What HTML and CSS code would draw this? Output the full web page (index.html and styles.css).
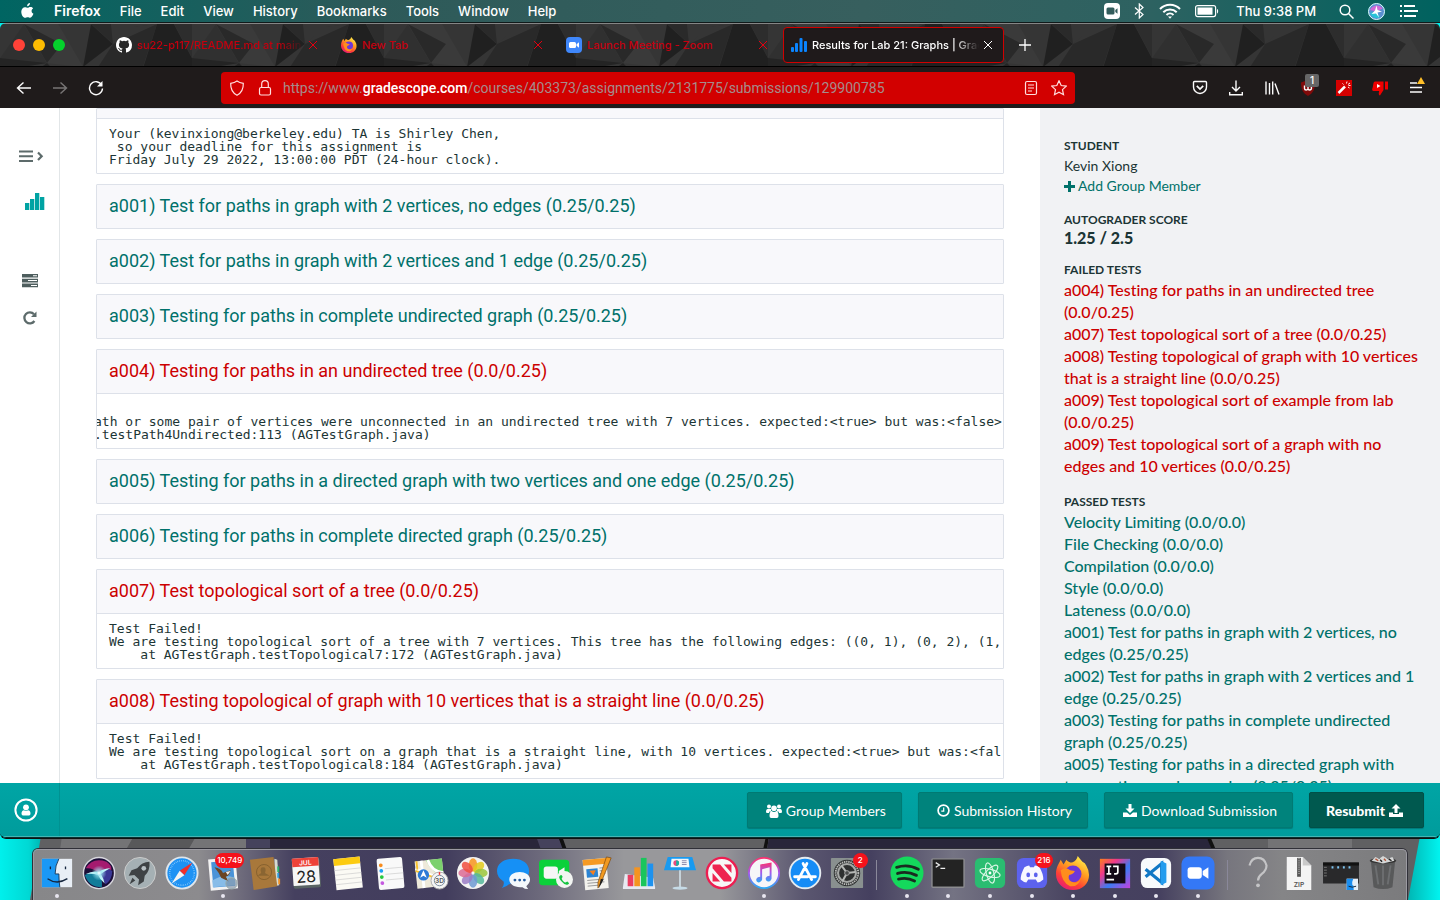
FILE: index.html
```html
<!DOCTYPE html>
<html lang="en">
<head>
<meta charset="utf-8">
<title>Results for Lab 21: Graphs | Gradescope</title>
<link rel="stylesheet" href="styles.css">
</head>
<body>
<svg class="wallpaper" viewBox="0 0 1440 900" preserveAspectRatio="none" aria-hidden="true">
  <defs>
    <linearGradient id="wg" x1="0" x2="1"><stop offset="0" stop-color="#00f0ec"/><stop offset=".02" stop-color="#00d8d4"/><stop offset=".035" stop-color="#009c9a"/><stop offset=".97" stop-color="#00a09e"/><stop offset="1" stop-color="#00f4f0"/></linearGradient>
  </defs>
  <rect width="1440" height="900" fill="url(#wg)"/>
  <path d="M41 836H1420L1408 900H30Z" fill="#606062"/>
  <path d="M62 836H134L126 850H60ZM196 836H248V850H188Z" fill="#747476"/>
  <path d="M134 836H196L188 850H126Z" fill="#58585a"/>
  <path d="M246 836H560L566 850H246Z" fill="#29263a"/>
  <path d="M246 836H270V850H246ZM536 836H558L564 850H541Z" fill="#45425c"/>
  <path d="M558 836H562L567 850H563ZM766 836H769L767 850H763Z" fill="#111"/>
  <path d="M769 836H1206L1213 850H767Z" fill="#29263a"/>
  <path d="M1206 836H1210L1216 850H1212Z" fill="#111"/>
  <path d="M1268 836H1352V850H1268Z" fill="#737375"/>
</svg>
<div class="desktop">
  <header class="menubar">
    <svg class="apple" viewBox="0 0 14 17"><path fill="#fff" d="M9.7 0c.1 1.800-1.400 3.500-3.100 3.500C6.400 1.800 8 .2 9.700 0zM13 5.800c-1 .600-1.600 1.500-1.600 2.700 0 1.400.800 2.500 2 3-.600 1.800-2 4.300-3.500 4.300-1 0-1.500-.600-2.700-.600-1.200 0-1.700.600-2.700.600C2.300 15.800.300 12.500.300 9.300c0-3.100 2-4.900 4-4.900 1.200 0 2 .700 2.900.7.900 0 1.800-.800 3.200-.8 1 0 2 .500 2.600 1.500z"/></svg>
    <nav class="menus"><b>Firefox</b><span>File</span><span>Edit</span><span>View</span><span>History</span><span>Bookmarks</span><span>Tools</span><span>Window</span><span>Help</span></nav>
    <div class="status">
      <svg width="16" height="16" viewBox="0 0 16 16"><rect width="16" height="16" rx="4" fill="#fff"/><rect x="2.500" y="4.500" width="8" height="7" rx="1.500" fill="#335d5c"/><path d="M11.300 7l2.200-1.700v5.400L11.300 9z" fill="#335d5c"/></svg>
      <svg width="11" height="16" viewBox="0 0 11 16" fill="none" stroke="#fff" stroke-width="1.200"><path d="M1 4.500l8 7L5.300 15V1L9 4.500l-8 7"/></svg>
      <svg width="22" height="16" viewBox="0 0 22 16" fill="none" stroke="#fff" stroke-width="2"><path d="M1 6a14 14 0 0 1 20 0M4.300 9.200a9.500 9.500 0 0 1 13.400 0M7.500 12a5 5 0 0 1 7 0"/><path d="M9 13.500h4L11 15.700z" fill="#fff" stroke="none"/></svg>
      <svg width="24" height="14" viewBox="0 0 24 14"><rect x=".6" y="1.600" width="20" height="11" rx="2" fill="none" stroke="#fff" stroke-width="1.200"/><rect x="2.500" y="3.500" width="15" height="7.200" fill="#fff"/><path d="M22 5v4.500c1.500-.500 1.500-4 0-4.500z" fill="#fff"/></svg>
      <span class="clock">Thu 9:38 PM</span>
      <svg width="15" height="15" viewBox="0 0 15 15" fill="none" stroke="#fff" stroke-width="1.500"><circle cx="6" cy="6" r="4.800"/><path d="M9.500 9.500l5 5"/></svg>
      <svg width="17" height="17" viewBox="0 0 34 34"><circle cx="17" cy="17" r="16" fill="#5b8fd0" stroke="#dff" stroke-width="2"/><path d="M4 14C8 3 24 2 29 11l-12 6z" fill="#d06ad8"/><path d="M4 20c3 9 14 13 20 8l-7-11z" fill="#27c4d8"/><path d="M17 5l2 9 9 3-9 2 3 10-6-8-9 1 7-7z" fill="#fff"/></svg>
      <svg width="19" height="14" viewBox="0 0 19 14" stroke="#fff" stroke-width="2"><path d="M1 2h2M1 7h2M1 12h2M5 2h11M5 7h14M5 12h12"/></svg>
    </div>
  </header>

  <div class="window">
    <div class="tabstrip">
      <svg class="pattern" aria-hidden="true"><defs><pattern id="tri" width="192" height="44" patternUnits="userSpaceOnUse"><rect width="192" height="44" fill="#353535"/>
        <path d="M91 0l22 20-30 23z" fill="#202020"/><path d="M91 0h20l2 20z" fill="#2a2a2a"/><path d="M113 20l20-17 24-3-14 43H98z" fill="#292929"/><path d="M132 3l25-3-44 20z" fill="#353535"/><path d="M157 0h17l18 34v10h-49z" fill="#202020"/><path d="M174 0h18v34z" fill="#2d2d2d"/><path d="M0 34L24 0l23 39-30 5H0z" fill="#303030"/><path d="M24 0h34L83 43 47 39z" fill="#3a3a3a"/><path d="M24 0l38 20-15 19z" fill="#292929"/><path d="M47 39l-7 5h12zM0 34l47 5-30 5H0z" fill="#242424"/></pattern></defs><rect width="100%" height="100%" fill="url(#tri)"/></svg>
      <div class="lights"><button class="light red" aria-label="Close window"></button><button class="light yellow" aria-label="Minimize"></button><button class="light green" aria-label="Zoom window"></button></div>
      <div class="tabs">
        <div class="tab"><svg width="16" height="16" viewBox="0 0 16 16"><path fill="#fff" d="M8 0C3.580 0 0 3.580 0 8c0 3.540 2.290 6.530 5.470 7.590.4.070.55-.17.55-.38 0-.19-.01-.82-.01-1.490-2.010.37-2.530-.49-2.690-.94-.09-.23-.48-.94-.82-1.130-.28-.15-.68-.52-.01-.53.63-.01 1.080.58 1.230.82.72 1.210 1.870.87 2.330.66.07-.52.28-.87.51-1.070-1.780-.2-3.640-.89-3.640-3.950 0-.87.31-1.590.82-2.150-.08-.2-.36-1.020.08-2.120 0 0 .67-.21 2.200.82a7.600 7.600 0 0 1 4 0c1.530-1.040 2.200-.82 2.200-.82.44 1.100.16 1.920.08 2.120.51.56.82 1.270.82 2.150 0 3.070-1.870 3.750-3.650 3.950.29.25.54.73.54 1.480 0 1.070-.01 1.930-.01 2.200 0 .21.15.46.55.38A8 8 0 0 0 16 8c0-4.420-3.580-8-8-8z"/></svg><span class="tab-title fade">su22-p117/README.md at main</span><button class="tab-close" aria-label="Close tab"><svg viewBox="0 0 8 8"><path d="M0 0l8 8M8 0L0 8"/></svg></button></div>
        <div class="tab"><svg width="16" height="16" viewBox="0 0 36 36"><use href="#fox"/></svg><span class="tab-title">New Tab</span><button class="tab-close" aria-label="Close tab"><svg viewBox="0 0 8 8"><path d="M0 0l8 8M8 0L0 8"/></svg></button></div>
        <div class="tab"><svg width="16" height="16" viewBox="0 0 16 16"><rect width="16" height="16" rx="4" fill="#3f87fb"/><rect x="3" y="5" width="7" height="6" rx="1.500" fill="#fff"/><path d="M10.500 7.200L13 5.300v5.400l-2.500-1.900z" fill="#fff"/></svg><span class="tab-title">Launch Meeting - Zoom</span><button class="tab-close" aria-label="Close tab"><svg viewBox="0 0 8 8"><path d="M0 0l8 8M8 0L0 8"/></svg></button></div>
        <div class="tab active"><svg width="16" height="16" viewBox="0 0 16 16" fill="#0a84ff"><rect y="10" width="3" height="5" rx="1"/><rect x="4" y="6" width="3" height="9" rx="1"/><rect x="8.500" y="1" width="3" height="14" rx="1"/><rect x="13" y="4" width="3" height="11" rx="1"/></svg><span class="tab-title fade">Results for Lab 21: Graphs | Grad</span><button class="tab-close" aria-label="Close tab"><svg viewBox="0 0 8 8"><path d="M0 0l8 8M8 0L0 8"/></svg></button></div>
        <button class="newtab" aria-label="New tab"><svg width="12" height="12" viewBox="0 0 12 12" stroke="#fff" stroke-width="1.300"><path d="M6 0v12M0 6h12"/></svg></button>
      </div>
    </div>
    <div class="toolbar">
      <div class="navbtns">
        <button aria-label="Back"><svg viewBox="0 0 16 16"><path d="M15 8H1.500M7.500 2.500L1.500 8l6 5.500"/></svg></button>
        <button class="dim" aria-label="Forward"><svg viewBox="0 0 16 16"><path d="M1 8h13.500M8.500 2.500l6 5.500-6 5.500"/></svg></button>
        <button aria-label="Reload"><svg viewBox="0 0 16 16"><path d="M13.700 5A6.500 6.500 0 1 0 14.500 8.500"/><path d="M14.500 1v5.500H9z" fill="#fff" stroke="none"/></svg></button>
      </div>
      <div class="urlbar">
        <svg viewBox="0 0 16 16"><path d="M8 1C6 2.500 4 3 1.700 3.300 1.500 9 3.500 13 8 15.300c4.500-2.300 6.500-6.300 6.300-12C12 3 10 2.500 8 1z"/></svg>
        <svg viewBox="0 0 16 16"><rect x="2.500" y="7.500" width="11" height="7.500" rx="1.500"/><path d="M4.700 7.500V4a3.300 3.300 0 0 1 6.600 0v3.500"/></svg>
        <div class="url">https://www.<b>gradescope.com</b>/courses/403373/assignments/2131775/submissions/129900785</div>
        <svg viewBox="0 0 16 16"><rect x="2.500" y="1.500" width="11" height="13" rx="1.500"/><path d="M5 5h6M5 8h6M5 11h4"/></svg>
        <svg viewBox="0 0 16 16"><path d="M8 .8l2.200 4.700 5.100.6-3.800 3.500 1 5.100L8 12.200l-4.500 2.500 1-5.100L.7 6.100l5.100-.6z"/></svg>
      </div>
      <div class="tools">
        <button aria-label="Pocket"><svg viewBox="0 0 16 16"><path d="M2.500 1.500h11a1 1 0 0 1 1 1V7a6.500 6.500 0 0 1-13 0V2.500a1 1 0 0 1 1-1z"/><path d="M4.800 5.800L8 9l3.200-3.200" stroke-width="1.700"/></svg></button>
        <button aria-label="Downloads"><svg viewBox="0 0 16 16"><path d="M8 .5v10M4 7l4 4 4-4M1.700 12v2.700h12.600V12"/></svg></button>
        <button aria-label="Library"><svg viewBox="0 0 16 16"><path d="M2 1.500v13M5.500 3v11.500M8.700 1.500v13M11 3.500l4 11"/></svg></button>
        <button class="ublock" aria-label="uBlock"><svg viewBox="0 0 16 16"><path d="M8 0l7 2.500C15 9 13.500 13 8 16 2.500 13 1 9 1 2.500z" fill="#800a0a" stroke="none"/><path d="M4.500 5.500v3q0 1.500 1.700 1.500T8 8.500v-2 2q0 1.500 1.700 1.500t1.800-2q0-1.500-1-2.500"/></svg><span class="count">1</span></button>
        <button aria-label="Wand"><svg viewBox="0 0 16 16"><rect width="16" height="16" fill="#d40000" stroke="none"/><path d="M2.500 13L9 6.500" stroke-width="2.500"/><path d="M6.500 3.500l1 1M11 1.500l-.5 2M14 3l-2 1.500M12 7l1.500 1M12.500 5.500h2" stroke-width="1"/></svg></button>
        <button aria-label="Dislike"><svg viewBox="0 0 16 16"><path d="M3 1.500h8.500V10L8 15.500c-1.500-.5-1.500-2-.8-4.500H1.500C-.3 11 0 9 .7 7.500L1.500 3q.3-1.500 1.500-1.500zM13 1.500h3v8h-3z" fill="#f00000" stroke="none"/><path d="M5 4l3.500 2L5 8z" fill="#fff" stroke="none"/></svg></button>
        <button class="menu" aria-label="Menu"><svg viewBox="0 0 16 16"><path d="M2 3h7M2 7.500h12M2 12h12"/></svg><svg class="warn" viewBox="0 0 8 7"><path d="M4 0l4 7H0z" fill="#ffbf28" stroke="none"/></svg></button>
      </div>
    </div>

    <div class="page">
      <aside class="rail">
        <button aria-label="Expand"><svg width="26" height="14" viewBox="0 0 26 14" fill="none" stroke="#5d6b6b"><path d="M0 2.500h14M0 7.200h14M0 12h14" stroke-width="2"/><path d="M19 3.500l3.700 3.700L19 11" stroke-width="2.200"/></svg></button>
        <button class="chart" aria-label="Assignment"><svg width="20" height="18" viewBox="0 0 20 18" fill="#00a3a3"><rect y="10" width="4.300" height="7"/><rect x="5" y="6" width="4.300" height="11"/><rect x="10" width="4.300" height="17"/><rect x="15" y="4" width="4.300" height="13"/></svg></button>
        <button class="server" aria-label="Rubric"><svg width="16" height="14" viewBox="0 0 16 14" fill="#4e5e5e"><path d="M0 0h16v3.600H0zM0 4.800h16v3.600H0zM0 9.600h16v3.600H0z"/><path d="M11 1.300h4v1h-4zM6 6.100h9v1H6zM9 10.900h6v1H9z" fill="#fff"/></svg></button>
        <button aria-label="Regrade"><svg width="16" height="16" viewBox="0 0 16 16"><path d="M12.400 11A5.500 5.500 0 1 1 12 4.200" fill="none" stroke="#5d6b6b" stroke-width="2.300"/><path d="M14.500 1.500V7H9z" fill="#5d6b6b"/></svg></button>
      </aside>
      <main class="results">
        <section class="card"><h2 class="cut"></h2><pre>Your (kevinxiong@berkeley.edu) TA is Shirley Chen,
 so your deadline for this assignment is
Friday July 29 2022, 13:00:00 PDT (24-hour clock).</pre></section>
        <section class="card"><h2>a001) Test for paths in graph with 2 vertices, no edges (0.25/0.25)</h2></section>
        <section class="card"><h2>a002) Test for paths in graph with 2 vertices and 1 edge (0.25/0.25)</h2></section>
        <section class="card"><h2>a003) Testing for paths in complete undirected graph (0.25/0.25)</h2></section>
        <section class="card fail"><h2>a004) Testing for paths in an undirected tree (0.0/0.25)</h2><pre class="scrolled">
 
ath or some pair of vertices were unconnected in an undirected tree with 7 vertices. expected:&lt;true&gt; but was:&lt;false&gt;
.testPath4Undirected:113 (AGTestGraph.java)</pre></section>
        <section class="card"><h2>a005) Testing for paths in a directed graph with two vertices and one edge (0.25/0.25)</h2></section>
        <section class="card"><h2>a006) Testing for paths in complete directed graph (0.25/0.25)</h2></section>
        <section class="card fail"><h2>a007) Test topological sort of a tree (0.0/0.25)</h2><pre>Test Failed!
We are testing topological sort of a tree with 7 vertices. This tree has the following edges: ((0, 1), (0, 2), (1,
    at AGTestGraph.testTopological7:172 (AGTestGraph.java)</pre></section>
        <section class="card fail"><h2>a008) Testing topological of graph with 10 vertices that is a straight line (0.0/0.25)</h2><pre>Test Failed!
We are testing topological sort on a graph that is a straight line, with 10 vertices. expected:&lt;true&gt; but was:&lt;fal
    at AGTestGraph.testTopological8:184 (AGTestGraph.java)</pre></section>
      </main>
      <aside class="outline">
        <h3>STUDENT</h3>
        <p class="name">Kevin Xiong</p>
        <a class="add" href="#"><svg width="11" height="11" viewBox="0 0 11 11"><path d="M5.500 0v11M0 5.500h11" stroke="#00716a" stroke-width="3"/></svg>Add Group Member</a>
        <h3>AUTOGRADER SCORE</h3>
        <p class="score">1.25 / 2.5</p>
        <h3>FAILED TESTS</h3>
        <ul class="fail">
          <li><a href="#">a004) Testing for paths in an undirected tree<br>(0.0/0.25)</a></li>
          <li><a href="#">a007) Test topological sort of a tree (0.0/0.25)</a></li>
          <li><a href="#">a008) Testing topological of graph with 10 vertices<br>that is a straight line (0.0/0.25)</a></li>
          <li><a href="#">a009) Test topological sort of example from lab<br>(0.0/0.25)</a></li>
          <li><a href="#">a009) Test topological sort of a graph with no<br>edges and 10 vertices (0.0/0.25)</a></li>
        </ul>
        <h3>PASSED TESTS</h3>
        <ul>
          <li><a href="#">Velocity Limiting (0.0/0.0)</a></li>
          <li><a href="#">File Checking (0.0/0.0)</a></li>
          <li><a href="#">Compilation (0.0/0.0)</a></li>
          <li><a href="#">Style (0.0/0.0)</a></li>
          <li><a href="#">Lateness (0.0/0.0)</a></li>
          <li><a href="#">a001) Test for paths in graph with 2 vertices, no<br>edges (0.25/0.25)</a></li>
          <li><a href="#">a002) Test for paths in graph with 2 vertices and 1<br>edge (0.25/0.25)</a></li>
          <li><a href="#">a003) Testing for paths in complete undirected<br>graph (0.25/0.25)</a></li>
          <li><a href="#">a005) Testing for paths in a directed graph with<br>two vertices and one edge (0.25/0.25)</a></li>
        </ul>
      </aside>
    </div>

    <footer class="actions">
      <button class="account" aria-label="Account"><svg width="24" height="24" viewBox="0 0 24 24"><circle cx="12" cy="12" r="10.600" fill="none" stroke="#fff" stroke-width="2"/><circle cx="12" cy="9.300" r="2.900" fill="#fff"/><path d="M7.500 15.500q0-3 2.500-3.300 2 1.200 4 0 2.500.3 2.500 3.300 0 2-1.500 2h-6q-1.500 0-1.500-2z" fill="#fff"/></svg></button>
      <div class="buttons">
        <button class="btn"><svg width="16" height="14" viewBox="0 0 16 14" fill="#fff"><circle cx="3" cy="2.500" r="2"/><circle cx="13" cy="2.500" r="2"/><circle cx="8" cy="4.200" r="2.800"/><path d="M0 7.500Q0 5 1.500 5H5q-.3 1.500.7 2.500H3.500L3 9H1Q0 9 0 7.500zM16 7.500Q16 5 14.500 5H11q.3 1.500-.7 2.500h2.200L13 9h2q1 0 1-1.500zM3.500 12q0-4.500 2.300-4.700 2.200 1.300 4.400 0 2.300.2 2.300 4.700 0 2-1.700 2H5.200q-1.700 0-1.700-2z"/></svg>Group Members</button>
        <button class="btn"><svg width="13" height="13" viewBox="0 0 13 13" fill="none" stroke="#fff"><circle cx="6.500" cy="6.500" r="5.400" stroke-width="1.700"/><path d="M6.700 3.500v3.700H4.300" stroke-width="1.200"/></svg>Submission History</button>
        <button class="btn"><svg width="14" height="13" viewBox="0 0 14 13" fill="#fff"><path d="M5.500 0h3v4.500h3L7 9 2.500 4.500h3z"/><path d="M0 8.500h4l3 2.500 3-2.500h4V13H0z"/></svg>Download Submission</button>
        <button class="btn primary">Resubmit<svg width="14" height="13" viewBox="0 0 14 13" fill="#fff"><path d="M5.500 9h3V4.500h3L7 0 2.500 4.500h3z"/><path d="M0 8.500h4V10h6V8.500h4V13H0z"/></svg></button>
      </div>
    </footer>
  </div>

  <div class="dock">
    <div class="app on"><svg viewBox="0 0 36 36"><rect x="2" y="3" width="32" height="30" fill="#e9eff6"/><path d="M2 3h18q-4 7-4 16h4q0 8 1 14H2z" fill="#1a98f5"/><path d="M20 3q-4 7-4 16h4q0 8 1 14" fill="none" stroke="#16395c"/><path d="M8 24q10 7 21 0M11 11v3M27 11v3" fill="none" stroke="#14253d" stroke-width="1.400"/></svg></div>
    <div class="app"><svg viewBox="0 0 36 36"><defs><radialGradient id="siri"><stop stop-color="#fff"/><stop offset=".3" stop-color="#9fe6f2" stop-opacity=".8"/><stop offset="1" stop-color="#9fe6f2" stop-opacity="0"/></radialGradient></defs><circle cx="18" cy="18" r="16.500" fill="#1b0f38" stroke="#d8d8de" stroke-width="1.500"/><path d="M4 13Q11 1 26 6q6 4 5 9-8-3-13 3-7-6-14-5z" fill="#a51b6f"/><path d="M18 18Q27 11 32 16q0 9-7 14z" fill="#3a3896"/><path d="M3 20q7-4 15-2 4 6 3 15Q7 33 3 20z" fill="#127c9a"/><path d="M4 19q8-4 14-2 5-4 12-4-6 3-10 6 3 5 4 10-5-4-7-9-6-2-13-1z" fill="#c5f6fa"/><circle cx="18" cy="18" r="8" fill="url(#siri)"/></svg></div>
    <div class="app"><svg viewBox="0 0 36 36"><circle cx="18" cy="18" r="16.500" fill="#a5b0b4" stroke="#ccc"/><path d="M28 6q-8 0-13 7l-6 2-3 6 6-1 5 5-1 6 6-4 1-6q6-6 5-15zM10 23l-3 7 6-4z" fill="#3e4245"/><circle cx="22" cy="13" r="2.500" fill="#b8c0c4"/></svg></div>
    <div class="app"><svg viewBox="0 0 36 36"><circle cx="18" cy="18" r="16.500" fill="#1e92f4" stroke="#dfe6ec" stroke-width="2"/><circle cx="18" cy="18" r="13" fill="none" stroke="#a9dafd" stroke-width="1.600" stroke-dasharray=".6 1.400"/><path d="M29 7L15.500 15.500l5 5z" fill="#f0302c"/><path d="M7 29l8.500-13.500 5 5z" fill="#f4f4f4"/></svg></div>
    <div class="app on"><svg viewBox="0 0 36 36"><g transform="rotate(-5 18 18)"><rect x="5" y="4" width="26" height="30" fill="#4a93d8" stroke="#f2f2f2" stroke-width="3"/><path d="M6 25q12-7 24-1v8H6z" fill="#87bce8"/></g><path d="M9 12q7 1 9 6l8-3q-1 6-5 7l3 5-8-4q-2-5-7-11z" fill="#6b4523"/><path d="M21 17l5-1-3 4z" fill="#eee"/><circle cx="27" cy="29" r="6" fill="#778ba0" fill-opacity=".6" stroke="#9aa"/></svg><span class="badge">10,749</span></div>
    <div class="app"><svg viewBox="0 0 36 36"><path d="M28 3l3 1 2 27-5 1z" fill="#d6dad2"/><path d="M31 11h2v6h-2z" fill="#28b36a"/><path d="M31 18h2v5h-2z" fill="#2a9be0"/><path d="M32 24h2v6h-2z" fill="#f0932b"/><path d="M2 4L27 1l4 31-25 4z" fill="#a8783b"/><circle cx="17" cy="17" r="8" fill="none" stroke="#85602e"/><path d="M10 21q2-2 4-3-2-6 2-6 4 0 2 6 2 1 5 3" fill="#8a6532"/></svg></div>
    <div class="app"><svg viewBox="0 0 36 36"><g transform="rotate(-4 18 18)"><rect x="4" y="3" width="29" height="31" rx="2" fill="#596464"/><rect x="4" y="2" width="28" height="29" rx="1" fill="#f6f6f6"/><path d="M4 2h28v9H4z" fill="#ed4138"/><text x="18" y="9.500" class="cal-m">JUL</text><text x="18" y="28" class="cal-d">28</text></g></svg></div>
    <div class="app"><svg viewBox="0 0 36 36"><g transform="rotate(-6 18 18)"><rect x="4" y="2" width="28" height="33" fill="#fbfaf4"/><path d="M4 2h28v7H4z" fill="#fccb10"/><path d="M4 14h28M4 19h28M4 24h28M4 29h28" stroke="#ccc" stroke-width=".7"/></g></svg></div>
    <div class="app"><svg viewBox="0 0 36 36"><g transform="rotate(-5 18 18)"><rect x="5" y="2" width="27" height="33" rx="2" fill="#f9f9f9"/><path d="M13 13h19M13 19h19M13 25h19" stroke="#ccc" stroke-width=".7"/><circle cx="9" cy="9" r="2" fill="#f78b1d"/><circle cx="9" cy="15" r="2" fill="#1c9df5"/><circle cx="9" cy="21.500" r="2" fill="#27c93f"/><circle cx="9" cy="28" r="2" fill="#c55ae0"/></g></svg></div>
    <div class="app"><svg viewBox="0 0 36 36"><g transform="rotate(-6 18 18)"><rect x="2" y="4" width="29" height="29" fill="#eee9da"/><path d="M14 4h17v17Q19 19 14 4z" fill="#7bd16d"/><path d="M16 4q3 13 15 15" fill="none" stroke="#fff" stroke-width="3"/><path d="M2 12l29 15M9 4v29" stroke="#fff" stroke-width="3"/><path d="M2 14l27 13M4 4v9" stroke="#f9c22e" stroke-width="2"/></g><circle cx="10" cy="20" r="6" fill="#2c7ad6"/><path d="M10 15l3.500 8-3.500-2-3.500 2z" fill="#fff"/><circle cx="27" cy="26" r="9" fill="#f5f5f5" stroke="#aaa"/><circle cx="27" cy="26" r="5.500" fill="none" stroke="#789"/><path d="M27 17v3" stroke="#e33" stroke-width="1.500"/><text x="27" y="28.500" class="cal-m dark">3D</text></svg></div>
    <div class="app"><svg viewBox="0 0 36 36"><circle cx="18" cy="18" r="17" fill="#f4f4f2"/><g fill-opacity=".85"><ellipse cx="18" cy="9.500" rx="4.500" ry="7" fill="#f7941e"/><ellipse cx="18" cy="9.500" rx="4.500" ry="7" fill="#e3ca1c" transform="rotate(45 18 18)"/><ellipse cx="18" cy="9.500" rx="4.500" ry="7" fill="#9bc63b" transform="rotate(90 18 18)"/><ellipse cx="18" cy="9.500" rx="4.500" ry="7" fill="#53b79a" transform="rotate(135 18 18)"/><ellipse cx="18" cy="9.500" rx="4.500" ry="7" fill="#6d9ad4" transform="rotate(180 18 18)"/><ellipse cx="18" cy="9.500" rx="4.500" ry="7" fill="#9a7dc6" transform="rotate(225 18 18)"/><ellipse cx="18" cy="9.500" rx="4.500" ry="7" fill="#dc6a94" transform="rotate(270 18 18)"/><ellipse cx="18" cy="9.500" rx="4.500" ry="7" fill="#f04e3e" transform="rotate(315 18 18)"/></g></svg></div>
    <div class="app"><svg viewBox="0 0 36 36"><path d="M17 3c10 0 17 5 17 13s-7 13-17 13l-3 0q-4 4-9 5 3-3 2-7Q0 23 0 16C0 8 7 3 17 3z" fill="#1690f5"/><path d="M24 17c6 0 11 3 11 8 0 3-2 5-4 7l2 3q-4 0-6-2c-8 1-14-3-14-8s5-8 11-8z" fill="#f4f8fc"/><circle cx="19" cy="25.500" r="1.500" fill="#245a9c"/><circle cx="24" cy="25.500" r="1.500" fill="#245a9c"/><circle cx="29" cy="25.500" r="1.500" fill="#245a9c"/></svg></div>
    <div class="app"><svg viewBox="0 0 36 36"><rect y="4" width="32" height="27" rx="4" fill="#0bd13a"/><rect x="5" y="11" width="15" height="13" rx="3" fill="#f6f6f6"/><path d="M21 16l6-4v11l-6-4z" fill="#f6f6f6"/><circle cx="27" cy="25" r="9" fill="#f2f5f2"/><path d="M22 21q2-2 3 1l-1 2q2 4 4 4l2-1q3 2 1 3-3 2-7-3-4-4-2-6z" fill="#14c440"/></svg></div>
    <div class="app"><svg viewBox="0 0 36 36"><g transform="rotate(-5 18 18)"><rect x="4" y="3" width="25" height="32" fill="#f4f3ee"/><path d="M4 3h25v6H4z" fill="#f59a23"/><path d="M7 13h12v9H7z" fill="#2b84d4"/><path d="M10 15h7l-3 5z" fill="#f57f20"/><path d="M21 13h6M21 16h6M21 19h6M7 25h18M7 28h18M7 31h13" stroke="#999"/></g><path d="M28 1l5 1-11 27-3 5v-6z" fill="#f29a20" stroke="#744410" stroke-width=".7"/><path d="M22 24l3 1-5 9z" fill="#222"/></svg></div>
    <div class="app"><svg viewBox="0 0 36 36"><path d="M3 19l-2 14v2h34v-2l-2-10z" fill="#e7eaf2"/><rect x="6" y="20" width="6" height="12" fill="#ea3e61"/><rect x="13" y="12" width="6" height="20" fill="#f59420"/><rect x="20" y="2" width="6" height="30" fill="#1ac55c"/><rect x="27" y="8" width="6" height="24" fill="#1d92ef"/></svg></div>
    <div class="app"><svg viewBox="0 0 36 36"><path d="M5 1h26l4 14H1z" fill="#189af0"/><path d="M9 3h18l1 9H8z" fill="#f4f7fa"/><circle cx="14" cy="7.500" r="3" fill="#e84a80"/><path d="M14 7.500v-3a3 3 0 0 1 0 6z" fill="#12b7a0"/><path d="M20 5h5M20 7h5M20 9h5" stroke="#88a"/><path d="M17 15h2v19h-2z" fill="#c9d7df"/><ellipse cx="18" cy="34" rx="8" ry="1.800" fill="#c6dbe7"/></svg></div>
    <div class="app"><svg viewBox="0 0 36 36"><circle cx="18" cy="18" r="16" fill="#f7f7f7" stroke="#ec1e51" stroke-width="2.500"/><path d="M8 9h8l12 14v4h-8L8 13zM8 18l8 9H8zM20 9h8v9z" fill="#ee2451"/></svg></div>
    <div class="app on"><svg viewBox="0 0 36 36"><defs><linearGradient id="mus" x2="0" y2="1"><stop stop-color="#fa3270"/><stop offset=".5" stop-color="#a558ec"/><stop offset="1" stop-color="#2baaf5"/></linearGradient></defs><circle cx="18" cy="18" r="16" fill="#f6f6f8" stroke="url(#mus)" stroke-width="2"/><path d="M14 9l12-2v17q-1 3-4 3-3-1-2-4 1-2 4-2v-9l-8 2v11q-1 3-4 3-3-1-2-4 1-2 4-2z" fill="url(#mus)"/></svg></div>
    <div class="app"><svg viewBox="0 0 36 36"><circle cx="18" cy="18" r="16.200" fill="#168cf6" stroke="#e5ebf0" stroke-width="2"/><path d="M16 8l9 17M20 8l-9 17M7 22h14M25 22h4" stroke="#fff" stroke-width="3" stroke-linecap="round"/></svg></div>
    <div class="app"><svg viewBox="0 0 36 36"><rect x="1" y="2" width="34" height="32" rx="1" fill="#89908f"/><circle cx="18" cy="18" r="14" fill="#2e3030"/><circle cx="18" cy="18" r="12" fill="none" stroke="#b6b8b6" stroke-width="2" stroke-dasharray="1.500 .8"/><circle cx="18" cy="18" r="9.500" fill="none" stroke="#a6a8a6" stroke-width="2.200"/><path d="M18 18l9-1M18 18l-6-8M18 18l-5 9" stroke="#b6b8b6" stroke-width="2.200"/><circle cx="18" cy="18" r="2.500" fill="#4a4c4c" stroke="#aaa"/></svg><span class="badge">2</span></div>
    <i class="sep"></i>
    <div class="app on"><svg viewBox="0 0 36 36"><circle cx="18" cy="18" r="17.500" fill="#14d95c"/><path d="M7 12q12-4 23 2M8 18.500q10-3 20 2M9 24.500q9-2.500 17 2" fill="none" stroke="#1a2a20" stroke-width="3" stroke-linecap="round"/></svg></div>
    <div class="app on"><svg viewBox="0 0 36 36"><rect x="1" y="3" width="34" height="30" rx="1" fill="#232323" stroke="#8c8c90" stroke-width="1.500"/><path d="M5 7l4 2.500L5 12M10 13h5" fill="none" stroke="#eee" stroke-width="1.300"/></svg></div>
    <div class="app on"><svg viewBox="0 0 36 36"><rect x="2" y="2" width="32" height="32" rx="6" fill="#2abd71"/><g fill="none" stroke="#d8f5e4" stroke-width="1.200"><ellipse cx="18" cy="18" rx="4" ry="11" transform="rotate(-15 18 18)"/><ellipse cx="18" cy="18" rx="4" ry="11" transform="rotate(45 18 18)"/><ellipse cx="18" cy="18" rx="4" ry="11" transform="rotate(105 18 18)"/></g><circle cx="18" cy="18" r="1.500" fill="#fff"/></svg></div>
    <div class="app on"><svg viewBox="0 0 36 36"><rect x="2" y="2" width="32" height="32" rx="7" fill="#5c62ee"/><path d="M10 12q3-2 5-2l1 2h4l1-2q3 0 5 2 4 7 4 13-3 3-6 3l-2-3h-8l-2 3q-3 0-6-3 0-6 4-13z" fill="#f8f8ff"/><ellipse cx="14" cy="20" rx="2" ry="2.500" fill="#5c62ee"/><ellipse cx="22" cy="20" rx="2" ry="2.500" fill="#5c62ee"/></svg><span class="badge">216</span></div>
    <div class="app on"><svg viewBox="0 0 36 36"><defs><linearGradient id="fx" x1=".8" y1="0" x2=".2" y2="1"><stop stop-color="#fff44f"/><stop offset=".4" stop-color="#ff9a1f"/><stop offset=".7" stop-color="#ff4036"/><stop offset="1" stop-color="#e3187d"/></linearGradient></defs><g id="fox"><path d="M23 0q3 4 5 6 3 1 4 4 3 5 3 10c0 9-7 16-17 16S0 29 0 19C0 12 3 8 5 4l3 5 3-5q2 3 6 3 5-2 6-7z" fill="url(#fx)"/><circle cx="18" cy="19" r="9" fill="#6d37d8"/><path d="M5 15q5-4 10 0l5 1q-2 4-6 4-2 4 2 7 7 3 10-3-2 9-11 8Q6 28 5 15z" fill="#ff8d1d"/></g></svg></div>
    <div class="app on"><svg viewBox="0 0 36 36"><defs><linearGradient id="ij" x2="1" y2="1"><stop stop-color="#fc801d"/><stop offset=".3" stop-color="#f0388b"/><stop offset=".6" stop-color="#3a7cf4"/><stop offset="1" stop-color="#c640dc"/></linearGradient></defs><rect x="2" y="3" width="32" height="31" fill="url(#ij)"/><rect x="7" y="8" width="22" height="21" fill="#140a18"/><path d="M9 11h5M11.500 11v8M9 19h5M16 11h5v6q0 2-2 2h-2M9 25h8" fill="none" stroke="#fff" stroke-width="1.800"/></svg></div>
    <div class="app on"><svg viewBox="0 0 36 36"><rect x="2" y="2" width="32" height="32" rx="7" fill="#f8fafc"/><path d="M7 14l17 14V8L7 22" fill="none" stroke="#1177c5" stroke-width="3.400"/><path d="M23 5l6 3v20l-6 3z" fill="#249cee"/></svg></div>
    <div class="app on"><svg viewBox="0 0 36 36"><rect x=".5" y=".5" width="35" height="35" rx="8" fill="#3478f6"/><rect x="7" y="12" width="15" height="12" rx="3" fill="#fff"/><path d="M23 16l6-4v12l-6-4z" fill="#fff"/></svg></div>
    <i class="sep"></i>
    <div class="app"><svg viewBox="0 0 36 36"><path d="M9 10q2-8 9-8t9 8q0 5-5 9-4 3-4 7" fill="none" stroke="#c4c4c6" stroke-width="2.300"/><circle cx="18" cy="31" r="2" fill="#c4c4c6"/></svg></div>
    <div class="app"><svg viewBox="0 0 36 36"><path d="M5 1h17l9 9v26H5z" fill="#f4f4f4"/><path d="M22 1l9 9h-9z" fill="#c9c9c9"/><path d="M16 2h4v20h-4z" fill="#555"/><path d="M18 2v18" stroke="#ddd" stroke-dasharray="1 1"/><text x="18" y="33" class="cal-m dark">ZIP</text></svg></div>
    <div class="app"><svg viewBox="0 0 36 36"><path d="M-1 7h38v22H-1z" fill="#29292b"/><path d="M-1 7h38v3H-1z" fill="#111"/><path d="M8 12h2M14 12h2M20 12h2M26 12h2" stroke="#7cc4f0" stroke-width="2.500"/><path d="M0 12h3M0 15h3M0 18h3M0 21h3" stroke="#777"/><rect x="24" y="24" width="12" height="12" fill="#e7eff8"/><path d="M24 24h7q-2 4-1 7h1l.5 5H24z" fill="#1b8ef0"/><path d="M26 32q4 2 8 0" fill="none" stroke="#123"/></svg></div>
    <div class="app"><svg viewBox="0 0 36 36"><path d="M5 4h26l-3 29q-10 4-20 0z" fill="#58595a"/><path d="M10 10l3 20M18 10v21M26 10l-3 20" stroke="#6d6f71" stroke-width="2"/><ellipse cx="18" cy="5" rx="14" ry="3" fill="#333"/><path d="M6 5l4-4 4 2 4-3 5 3 5-2 2 4-12 3z" fill="#d5d7d7"/><path d="M10 3l3 2M19 3l2 2" stroke="#b5563a" stroke-width="1.500"/><path d="M24 3l3 2M15 4l2 2" stroke="#222" stroke-width="1.500"/></svg></div>
  </div>
</div>
</body>
</html>
```
FILE: styles.css
```css
* { box-sizing: border-box; }
body { margin: 0; height: 100vh; overflow: hidden; font-family: Lato, "Liberation Sans", sans-serif; color: #1c3535; }
button { margin: 0; padding: 0; border: 0; background: none; font: inherit; color: inherit; display: flex; align-items: center; justify-content: center; }
svg { flex: none; display: block; }
h2, h3, p, ul, pre { margin: 0; padding: 0; }
a { color: inherit; text-decoration: none; }

.wallpaper { position: absolute; inset: 0; width: 100%; height: 100%; z-index: -1; }
.desktop { height: 100vh; display: flex; flex-direction: column; }

.menubar { height: 23px; flex: none; display: flex; align-items: center; padding: 0 22px 0 21px; border-bottom: 1px solid #101a1a; background: linear-gradient(90deg, #006562, #2d5a59 25%, #375f5e 60%, #2d6261 80%, #00625f); color: #fff; font: 500 13px Inter, sans-serif; }
.apple { width: 13px; height: 16px; margin-right: 20px; }
.menus { display: flex; gap: 19px; flex: 1; }
.menus b { font-size: 14px; font-weight: 600; line-height: 16px; }
.status { display: flex; align-items: center; gap: 14px; }
.clock { margin: 0 9px 0 3px; white-space: nowrap; }

.window { flex: 1; min-height: 0; display: flex; flex-direction: column; margin-bottom: 11px; border-radius: 6px; overflow: hidden; border-bottom: 1px solid #072e2e; box-shadow: 0 1px 0 #111; }

.tabstrip { position: relative; height: 44px; flex: none; display: flex; align-items: center; padding-left: 13px; border-top: 1px solid #858585; border-bottom: 1px solid #000; }
.pattern { position: absolute; inset: 0; width: 100%; height: 100%; z-index: -1; }
.lights { display: flex; gap: 8px; width: 95px; }
.light { width: 12px; height: 12px; border-radius: 50%; }
.red { background: #ff4238; }
.yellow { background: #fdbc02; }
.green { background: #05d22c; }
.tabs { display: flex; gap: 4px; align-items: center; }
.tab { width: 221px; height: 36px; display: flex; align-items: center; gap: 5px; padding: 0 12px 0 8px; color: #c4000f; font: 500 11px/18px Inter, sans-serif; }
.tab.active { background: #1f1a1b; border: 1px solid #d00000; border-radius: 4px; color: #fff; padding: 0 11px 0 7px; }
.tab-title { flex: 1; white-space: nowrap; overflow: hidden; }
.fade { mask-image: linear-gradient(90deg, #000 85%, transparent); }
.tab-close svg { width: 8px; height: 8px; stroke: #e30010; stroke-width: 1; overflow: visible; }
.active .tab-close svg { stroke: #fff; }
.newtab { width: 34px; height: 34px; }

.toolbar { height: 41px; flex: none; display: flex; align-items: center; background: #1f1b1b; padding: 0 16px; }
.toolbar svg { width: 16px; height: 16px; fill: none; stroke: #fbfbfb; stroke-width: 1.4; }
.navbtns, .tools { display: flex; gap: 20px; }
.navbtns { width: 205px; flex: none; }
.dim { opacity: .4; }
.urlbar { flex: 1; height: 32px; border-radius: 4px; background: #d20000; display: flex; align-items: center; gap: 12px; padding: 0 8px; margin-right: 117px; }
.urlbar svg { stroke: #ffdede; stroke-width: 1.2; }
.url { flex: 1; font: 400 14px Roboto, sans-serif; color: #a58c8c; white-space: nowrap; margin-left: -2px; }
.url b { color: #fff; font-weight: 500; }
.ublock, .menu { position: relative; }
.count { position: absolute; left: 5px; top: -6px; width: 14px; height: 13px; border-radius: 2px; background: #666; color: #fff; font: 500 10px/13px Inter, sans-serif; }
.toolbar .warn { position: absolute; left: 9px; top: -3px; width: 8px; height: 7px; }

.page { flex: 1; min-height: 0; display: flex; background: #fff; overflow: hidden; }
.rail { width: 60px; flex: none; border-right: 1px solid #e2e6e8; padding-top: 41px; display: flex; flex-direction: column; align-items: center; }
.rail button { height: 14px; margin-bottom: 30px; padding-left: 4px; }
.rail .chart { height: 18px; padding-left: 11px; margin-bottom: 63px; }
.rail .server { margin-bottom: 22px; padding: 0; }
.rail button:last-child { height: 16px; padding: 0; }

.results { flex: 1; min-width: 0; padding: 0 36px; }
.card { border: 1px solid #dde1e9; margin-bottom: 10px; border-radius: 1px; overflow: hidden; }
.card h2 { height: 43px; padding: 0 12px; background: #f8f8fb; color: #00716a; font: 400 18px/42px Roboto, sans-serif; white-space: nowrap; }
.card h2.cut { height: 9px; }
.card pre { height: 55px; padding: 8px 0 0 12px; border-top: 1px solid #dde1e9; font: 13px/13px "DejaVu Sans Mono", monospace; }
.card pre.scrolled { padding-left: 0; margin-left: -3px; }
.card.fail h2, ul.fail { color: #cc0000; }

.outline { width: 400px; flex: none; background: #f1f2f4; padding: 30px 24px; overflow: hidden; font-size: 14px; }
.outline h3 { font-size: 12px; line-height: 16px; font-weight: 700; }
.name { line-height: 20px; margin-top: 2px; }
.add { display: flex; align-items: center; gap: 3px; line-height: 20px; color: #00716a; margin-bottom: 16px; }
.score { font-size: 16px; line-height: 20px; font-weight: 900; margin-bottom: 14px; }
.outline ul { list-style: none; font-size: 16px; line-height: 22px; font-weight: 500; font-variant-ligatures: none; white-space: nowrap; margin: 1px 0 17px; }
.outline ul:not(.fail) { color: #00716a; }

.actions { height: 54px; flex: none; display: flex; align-items: center; background: linear-gradient(#00a5a5, #009c9c); padding-right: 16px; border-bottom: 1px solid #45b5b3; }
.account { width: 60px; align-self: stretch; border-right: 1px solid #009292; padding-right: 8px; }
.buttons { display: flex; gap: 16px; margin-left: auto; }
.btn { height: 36px; padding: 2px 15px 0 18px; gap: 4px; border: 1px solid #007a73; border-radius: 2px; background: #00837c; color: #fff; font-size: 14px; box-shadow: 0 1px 1px #007b7a; }
.primary { background: #00594f; border-color: #005048; font-weight: 900; padding: 2px 20px 0 16px; }

.dock { height: 51px; flex: none; margin: 0 33px; padding: 6px 6px 0; display: flex; justify-content: space-between; border: 1px solid #9c9ba2; border-bottom: 0; border-radius: 5px 5px 0 0; background: linear-gradient(90deg, #878789, #8c8b8e 12%, #6f6c7c 15%, #45405f 19%, #423d5d 30%, #6d6a7c 37%, #98989b 43%, #98989b 50%, #5b5770 56%, #45405f 61%, #747383 67%, #47425f 76%, #45405f 82%, #77767e 87%, #858587 91%, #7b7b7d); box-shadow: 0 0 0 1px #303038; }
.app { position: relative; width: 34px; height: 44px; }
.app svg { width: 34px; height: 34px; overflow: visible; }
.on::after { content: ""; position: absolute; left: 15px; bottom: 2px; width: 4px; height: 4px; border-radius: 50%; background: #e8e6f0; }
.badge { position: absolute; right: -4px; top: -3px; min-width: 15px; height: 15px; padding: 0 2px; border-radius: 8px; background: #f5121b; color: #fff; text-align: center; font: 500 8px/15px Inter, sans-serif; }
.sep { width: 1px; height: 30px; margin: 4px 5px 0; background: #8a889a; }
.cal-m { font: 600 7px Inter, sans-serif; text-anchor: middle; fill: #fff; }
.cal-d { font: 400 17px Inter, sans-serif; text-anchor: middle; fill: #222; }
.dark { fill: #555; }
```
